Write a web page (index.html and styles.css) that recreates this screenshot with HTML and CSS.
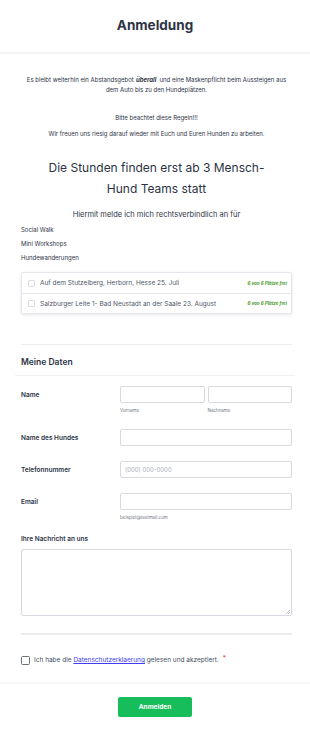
FILE: index.html
```html
<!DOCTYPE html>
<html lang="de">
<head>
<meta charset="utf-8">
<title>Anmeldung</title>
<link rel="stylesheet" href="styles.css">
</head>
<body>
<header class="header">
  <h1 class="title">Anmeldung</h1>
</header>
<main class="form">
  <div class="intro">
    <p class="p1">Es bleibt weiterhin ein Abstandsgebot <b class="em">überall</b> und eine Maskenpflicht beim Aussteigen aus dem Auto bis zu den Hundeplätzen.</p>
    <p class="p2">Bitte beachtet diese Regeln!!!</p>
    <p class="p3">Wir freuen uns riesig darauf wieder mit Euch und Euren Hunden zu arbeiten.</p>
  </div>
  <h2 class="big">Die Stunden finden erst ab 3 Mensch-Hund Teams statt</h2>
  <p class="sub">Hiermit melde ich mich rechtsverbindlich an für</p>
  <ul class="types">
    <li>Social Walk</li>
    <li>Mini Workshops</li>
    <li>Hundewanderungen</li>
  </ul>
  <div class="slots">
    <div class="slot"><span class="cb"></span><span class="slot-text">Auf dem Stutzelberg, Herborn, Hesse 25. Juli</span><span class="free">6 von 6 Plätze frei</span></div>
    <div class="slot"><span class="cb"></span><span class="slot-text">Salzburger Leite 1- Bad Neustadt an der Saale 23. August</span><span class="free">6 von 6 Plätze frei</span></div>
  </div>
  <hr class="sep sep-a">
  <h3 class="section">Meine Daten</h3>
  <hr class="sep-wide">
  <div class="row row-name">
    <div class="lbl">Name</div>
    <div class="pair">
      <div class="field"><div class="inp"></div><div class="hint">Vorname</div></div>
      <div class="field"><div class="inp"></div><div class="hint">Nachname</div></div>
    </div>
  </div>
  <div class="row">
    <div class="lbl">Name des Hundes</div>
    <div class="inp"></div>
  </div>
  <div class="row">
    <div class="lbl">Telefonnummer</div>
    <div class="inp"><span class="ph">(000) 000-0000</span></div>
  </div>
  <div class="row row-mail">
    <div class="lbl">Email</div>
    <div class="field"><div class="inp"></div><div class="hint">beispiel@testmail.com</div></div>
  </div>
  <div class="msg-lbl">Ihre Nachricht an uns</div>
  <div class="textarea"><span class="grip"></span></div>
  <hr class="sep sep-b">
  <div class="consent">
    <span class="cb2"></span>
    <span>Ich habe die <a href="#" class="link">Datenschutzerklaerung</a> gelesen und akzeptiert.</span>
    <span class="req">*</span>
  </div>
</main>
<footer class="footer">
  <button class="btn" type="button">Anmelden</button>
</footer>
</body>
</html>
```
FILE: styles.css
```css
* { box-sizing: border-box; }
body {
  margin: 0;
  font-family: Inter, "Noto Sans", sans-serif;
  color: #2c3345;
  background: #fff;
}
.header {
  padding: 15px 0 17px;
  border-bottom: 2px solid #f3f3f5;
}
.title {
  margin: 0;
  text-align: center;
  font-size: 13.5px;
  line-height: 20px;
  font-weight: 700;
}
.form {
  padding: 0 18px 0 21px;
}
.intro {
  text-align: center;
  font-size: 6px;
  line-height: 10px;
  color: #2c3345;
  padding-top: 21px;
}
.intro p { margin: 0; }
.em { font-style: italic; font-weight: 700; padding: 0 1.5px 0 0.5px; }
.p2 { margin-top: 18px !important; }
.p3 { margin-top: 6px !important; }
.big {
  margin: 18px 0 0;
  text-align: center;
  font-weight: 400;
  font-size: 12px;
  line-height: 21px;
  padding: 0 14px;
  color: #2c3345;
}
.sub {
  margin: 10px 0 0;
  text-align: center;
  font-size: 7.5px;
  line-height: 12px;
}
.types {
  list-style: none;
  margin: 2px 0 0;
  padding: 0;
  font-size: 6px;
  line-height: 14px;
}
.slots {
  margin-top: 7px;
  border: 1px solid #e6e7ec;
  box-shadow: 0 1px 3px rgba(40, 50, 80, 0.12);
  border-radius: 2px;
}
.slot {
  display: flex;
  align-items: center;
  height: 20px;
  padding: 0 4px 0 6px;
  font-size: 6.5px;
  color: #4e5668;
}
.slot + .slot { border-top: 1px solid #e6e7ec; }
.cb {
  width: 7px;
  height: 7px;
  border: 1px solid #dcdde3;
  border-radius: 1px;
  margin-right: 5px;
  flex: none;
}
.slot-text { flex: 1; color: #4e5668; }
.free {
  font-size: 4.5px;
  font-style: italic;
  font-weight: 700;
  color: #4c9a2a;
}
.sep {
  border: 0;
  height: 1px;
  background: #ececf1;
  margin: 0;
}
.sep-a { margin-top: 30px; }
.section {
  margin: 11px 0 0;
  font-size: 8.5px;
  line-height: 12px;
  font-weight: 600;
}
.sep-wide {
  border: 0;
  height: 1px;
  background: #f1f1f4;
  margin: 7px -3px 0 -6px;
}
.row {
  display: grid;
  grid-template-columns: 99px 1fr;
  align-items: start;
  margin-top: 14px;
}
.row-name { margin-top: 10px; }
.lbl {
  font-size: 6.5px;
  font-weight: 600;
  line-height: 17px;
  padding-top: 1px;
}
.pair {
  display: grid;
  grid-template-columns: 1fr 1fr;
  gap: 3px;
}
.inp {
  height: 17px;
  border: 1px solid #d6d9e2;
  border-radius: 2px;
  display: flex;
  align-items: center;
  padding-left: 4px;
}
.ph { font-size: 6px; color: #a9acbc; }
.hint {
  font-size: 4.5px;
  line-height: 8px;
  color: #6f7488;
  margin-top: 4px;
}
.msg-lbl {
  margin-top: 11px;
  font-size: 6.5px;
  font-weight: 600;
  line-height: 12px;
}
.textarea {
  margin-top: 4px;
  height: 67px;
  border: 1px solid #d6d9e2;
  border-radius: 2px;
  position: relative;
}
.grip {
  position: absolute;
  right: 1px;
  bottom: 1px;
  width: 4px;
  height: 4px;
  background: linear-gradient(135deg, transparent 45%, #b9bcc8 45%, #b9bcc8 55%, transparent 55%, transparent 70%, #b9bcc8 70%, #b9bcc8 80%, transparent 80%);
}
.sep-b {
  margin-top: 17px;
  height: 2px;
  background: #ececf1;
}
.consent {
  display: flex;
  align-items: center;
  margin-top: 20px;
  padding-bottom: 17px;
  font-size: 6.5px;
  line-height: 10px;
  color: #444d5f;
}
.cb2 {
  width: 9px;
  height: 9px;
  border: 1px solid #6b6f7e;
  border-radius: 1.5px;
  margin-right: 4px;
  flex: none;
}
.link { color: #3e3ef0; text-decoration: underline; }
.req { color: #f23a3c; margin-left: 4px; position: relative; top: -2px; }
.footer {
  border-top: 2px solid #f6f6f8;
  padding-top: 13px;
  display: flex;
  justify-content: center;
}
.btn {
  width: 74px;
  height: 20px;
  background: #18bd5b;
  color: #fff;
  border: 0;
  border-radius: 2px;
  font-family: Inter, sans-serif;
  font-weight: 700;
  font-size: 6.5px;
}
```
